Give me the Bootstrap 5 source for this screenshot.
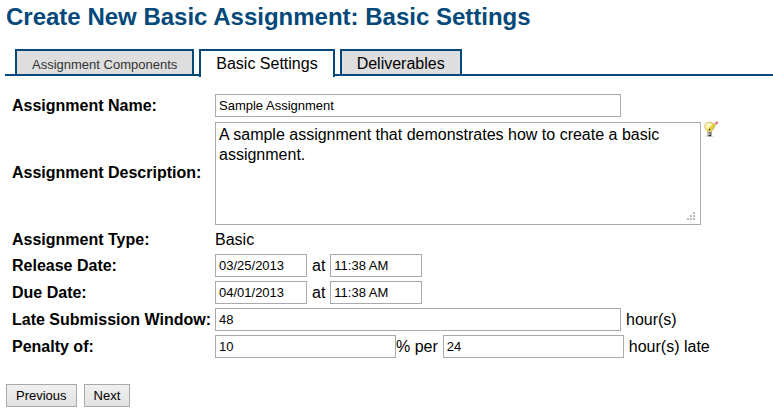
<!DOCTYPE html>
<html lang="en">
<head>
<meta charset="utf-8">
<meta name="viewport" content="width=device-width, initial-scale=1">
<title>Create New Basic Assignment: Basic Settings</title>
<link href="https://cdn.jsdelivr.net/npm/bootstrap@5.3.0/dist/css/bootstrap.min.css" rel="stylesheet">
<style>
:root { --brand: #04497a; --line: #a9a9ae; }
body { font-family: "Liberation Sans", Arial, sans-serif; font-size: 16px; line-height: 20px; color: #000; background: #fff; }
.page-title { font-size: 24px; line-height: 28px; color: var(--brand); padding: 3px 6px 0; margin-bottom: 18px; }
.step-tabs { margin-left: 5px; padding-left: 10px; gap: 5px; border-bottom: 2px solid var(--brand); }
.step-tabs .nav-link { height: 25px; padding: 3px 15px 0; border: 2px solid var(--brand); border-bottom: 0; border-radius: 0; background: #dedede; color: #000; line-height: 20px; margin: 0; }
.step-tabs .nav-link.visited-step { font-size: 13px; line-height: 22px; color: #333; }
.step-tabs .nav-link.active { height: 28px; margin-bottom: -3px; background: #fff; color: #000; border-color: var(--brand); }
.settings { padding: 18px 12px 0; gap: 4px; }
.field-name { width: 203px; flex: none; }
.field-row { min-height: 21px; }
.form-control { font-size: 13px; line-height: 15px; height: 23px; padding: 3px; border: 1px solid var(--line); border-radius: 0; color: #000; flex: 0 1 auto; }
.w-wide { width: 406px; }
.w-half { width: 181px; }
.w-short { width: 92px; }
.gap-before { padding-left: 5px; }
.gap-after { padding-right: 5px; }
.area-wrap { flex: 0 1 486px; padding-top: 1px; }
textarea.form-control { height: 103px; font-size: 16px; line-height: 20px; padding: 2px 3px; resize: none; display: block; }
.grip { right: 6px; bottom: 5px; }
.hint-icon { margin-left: 3px; }
.step-buttons { gap: 7px; padding: 26px 6px 0; }
.btn-step { font-size: 13px; line-height: 15px; height: 23px; padding: 3px 9px; border: 1px solid #a9a9a9; border-radius: 0; color: #000; background: linear-gradient(#f0f0f0, #e2e2e2); }
</style>
<script src="https://cdn.jsdelivr.net/npm/bootstrap@5.3.0/dist/js/bootstrap.bundle.min.js" defer></script>
</head>
<body>
<main>
  <h1 class="page-title fw-bold">Create New Basic Assignment: Basic Settings</h1>
  <nav class="nav step-tabs align-items-end" aria-label="Assignment steps">
    <a class="nav-link visited-step" href="#components">Assignment Components</a>
    <a class="nav-link active" aria-current="page" href="#settings">Basic Settings</a>
    <a class="nav-link" href="#deliverables">Deliverables</a>
  </nav>
  <form id="settings">
    <div class="settings d-flex flex-column">
      <div class="field-row d-flex align-items-center">
        <label class="field-name fw-bold" for="name">Assignment Name:</label>
        <input class="form-control w-wide" id="name" type="text" value="Sample Assignment">
      </div>
      <div class="field-row d-flex align-items-center">
        <label class="field-name fw-bold" for="description">Assignment Description:</label>
        <div class="area-wrap position-relative">
          <textarea class="form-control w-100" id="description">A sample assignment that demonstrates how to create a basic assignment.</textarea>
          <svg class="grip position-absolute" width="8" height="8" viewBox="0 0 8 8" fill="#b8b8b8" shape-rendering="crispEdges" aria-hidden="true"><path d="M6 0h2v2H6zM3 3h2v2H3zM6 3h2v2H6zM0 6h2v2H0zM3 6h2v2H3zM6 6h2v2H6z"/></svg>
        </div>
        <svg class="hint-icon align-self-start flex-shrink-0" width="16" height="16" viewBox="0 0 16 16" role="img" aria-label="Edit hint">
          <defs><radialGradient id="glow" cx=".35" cy=".3" r=".75"><stop offset="0" stop-color="#fffde0"/><stop offset=".5" stop-color="#f6ec8e"/><stop offset="1" stop-color="#e0cc50"/></radialGradient></defs>
          <ellipse cx="5.500" cy="15.200" rx="4.500" ry=".7" fill="#ddd"/>
          <path d="M3.500 10.800C3.300 9 .6 8 .6 4.900A5 4.400 0 0 1 10.500 4.900C10.500 8 7.800 9 7.600 10.800z" fill="url(#glow)" stroke="#c9b565" stroke-width=".8"/>
          <path d="M3.600 11h4v3.200l-1 1h-2l-1-1z" fill="#777"/><path d="M4.200 11.400h1.200v3H4.200z" fill="#d5d5d5"/><path d="M4.500 14h2.200v1.200H4.500z" fill="#333"/>
          <path d="M5.200 8.900l.8-2.200 5-4.700 1.500 1.500-5 4.700z" fill="#f2d52f" stroke="#b8982c" stroke-width=".5"/>
          <path d="M4.600 9.400l.6-1.800 1.200 1.200z" fill="#111"/>
          <path d="M10 2.700l1.300-1.200 1.600 1.600-1.300 1.200z" fill="#c3cbd0"/>
          <path d="M11.100 1.600l.9-.9q1-.6 1.700.1t0 1.600l-.9.9z" fill="#ed5968"/>
        </svg>
      </div>
      <div class="field-row d-flex align-items-center">
        <span class="field-name fw-bold">Assignment Type:</span>
        <span>Basic</span>
      </div>
      <div class="field-row d-flex align-items-center">
        <label class="field-name fw-bold" for="release">Release Date:</label>
        <input class="form-control w-short" id="release" type="text" value="03/25/2013">
        <label class="gap-before gap-after" for="release-time">at</label>
        <input class="form-control w-short" id="release-time" type="text" value="11:38 AM">
      </div>
      <div class="field-row d-flex align-items-center">
        <label class="field-name fw-bold" for="due">Due Date:</label>
        <input class="form-control w-short" id="due" type="text" value="04/01/2013">
        <label class="gap-before gap-after" for="due-time">at</label>
        <input class="form-control w-short" id="due-time" type="text" value="11:38 AM">
      </div>
      <div class="field-row d-flex align-items-center">
        <label class="field-name fw-bold" for="late">Late Submission Window:</label>
        <input class="form-control w-wide" id="late" type="text" value="48">
        <span class="gap-before">hour(s)</span>
      </div>
      <div class="field-row d-flex align-items-center">
        <label class="field-name fw-bold" for="penalty">Penalty of:</label>
        <input class="form-control w-half" id="penalty" type="text" value="10">
        <label class="gap-after" for="period">% per</label>
        <input class="form-control w-half" id="period" type="text" value="24">
        <span class="gap-before">hour(s) late</span>
      </div>
    </div>
    <div class="step-buttons d-flex">
      <button class="btn btn-step" type="button">Previous</button>
      <button class="btn btn-step" type="button">Next</button>
    </div>
  </form>
</main>
</body>
</html>
